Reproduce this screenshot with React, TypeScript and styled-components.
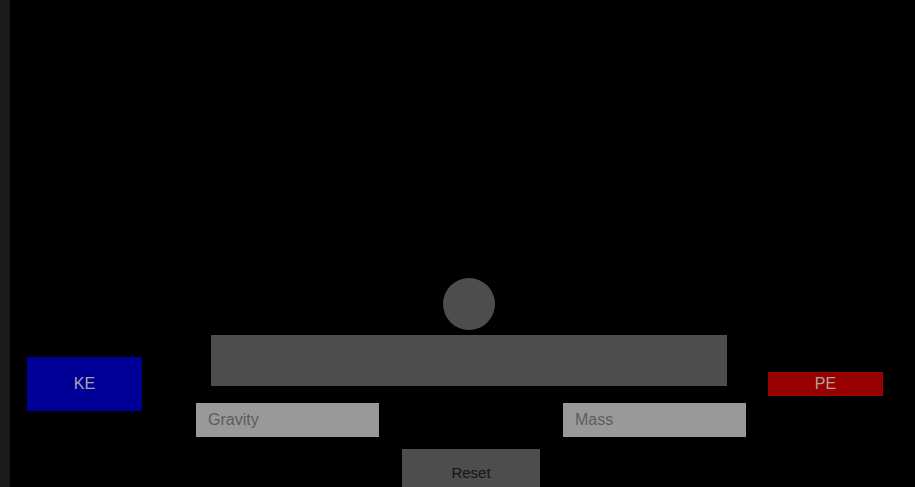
import React, { useState } from "react";
import styled, { createGlobalStyle } from "styled-components";

const GlobalStyle = createGlobalStyle`
  html, body {
    margin: 0;
    padding: 0;
    background: #000;
    overflow: hidden;
  }
  body {
    font-family: "Liberation Sans", Arial, sans-serif;
  }
`;

const Page = styled.div`
  display: flex;
  width: 915px;
  height: 487px;
  background: #000;
  overflow: hidden;
`;

const SideStrip = styled.div`
  width: 10px;
  flex-shrink: 0;
  background: #1a1a1a;
`;

const Stage = styled.div`
  flex: 1;
  display: grid;
  grid-template-columns: 186px 183px 184px 183px 1fr;
  grid-template-rows: 57px 68px 46px auto;
  align-items: start;
  padding-top: 278px;
`;

const Ball = styled.div`
  grid-column: 2 / 5;
  grid-row: 1;
  width: 52px;
  height: 52px;
  margin-left: 247px;
  border-radius: 50%;
  background: #4d4d4d;
`;

const Track = styled.div`
  grid-column: 2 / 5;
  grid-row: 2;
  width: 516px;
  height: 51px;
  margin-left: 15px;
  background: #4d4d4d;
`;

const EnergyBox = styled.div<{ $color: string; $height: number; $top: number; $col: number }>`
  grid-column: ${(p) => p.$col};
  grid-row: 2 / 4;
  width: 115px;
  height: ${(p) => p.$height}px;
  margin-top: ${(p) => p.$top}px;
  margin-left: ${(p) => (p.$col === 1 ? 17 : 22)}px;
  background: ${(p) => p.$color};
  color: #a6a6a6;
  font-size: 16px;
  display: flex;
  align-items: center;
  justify-content: center;
`;

const Field = styled.input<{ $col: number }>`
  grid-column: ${(p) => p.$col};
  grid-row: 3;
  box-sizing: border-box;
  width: 183px;
  height: 34px;
  border: none;
  outline: none;
  padding: 0 12px;
  background: #999;
  color: #333;
  font-family: "Liberation Sans", Arial, sans-serif;
  font-size: 16px;

  &::placeholder {
    color: #5c5c5c;
  }
`;

const ResetButton = styled.button`
  grid-column: 3;
  grid-row: 4;
  justify-self: center;
  width: 138px;
  height: 46px;
  border: none;
  background: #4d4d4d;
  color: #151515;
  font-family: "Liberation Sans", Arial, sans-serif;
  font-size: 15px;
  cursor: pointer;
`;

export default function App() {
  const [gravity, setGravity] = useState("");
  const [mass, setMass] = useState("");

  return (
    <Page>
      <GlobalStyle />
      <SideStrip />
      <Stage>
        <Ball />
        <Track />
        <EnergyBox $col={1} $color="#000099" $height={54} $top={22}>
          KE
        </EnergyBox>
        <EnergyBox $col={5} $color="#990000" $height={24} $top={37}>
          PE
        </EnergyBox>
        <Field
          $col={2}
          placeholder="Gravity"
          value={gravity}
          onChange={(e) => setGravity(e.target.value)}
        />
        <Field
          $col={4}
          placeholder="Mass"
          value={mass}
          onChange={(e) => setMass(e.target.value)}
        />
        <ResetButton
          onClick={() => {
            setGravity("");
            setMass("");
          }}
        >
          Reset
        </ResetButton>
      </Stage>
    </Page>
  );
}
